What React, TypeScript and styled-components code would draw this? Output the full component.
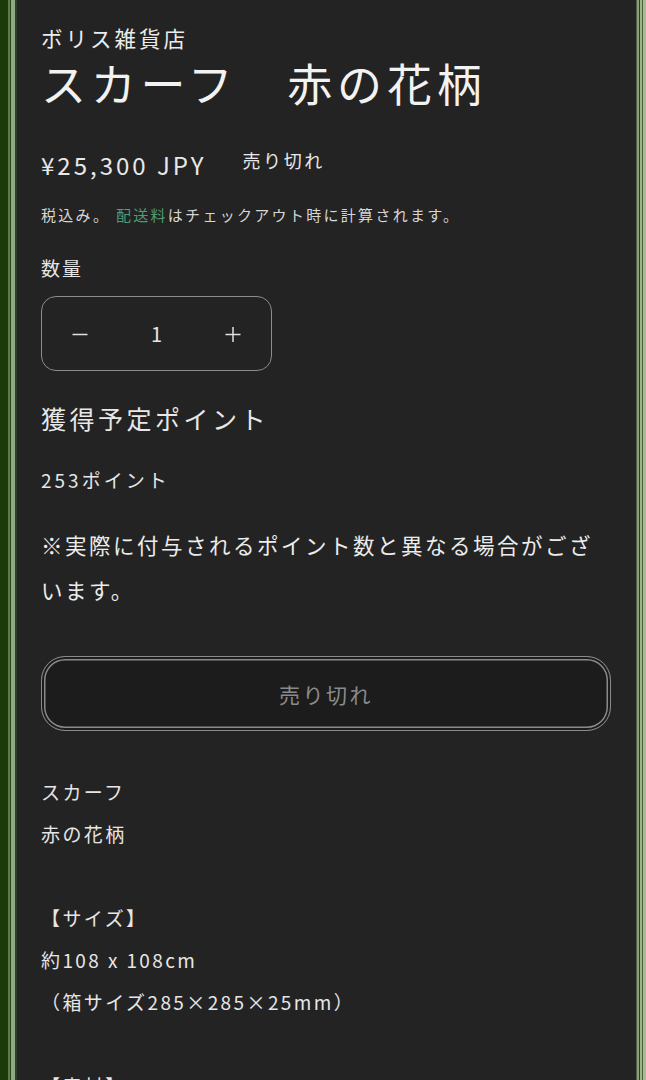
import styled, { createGlobalStyle } from 'styled-components';

// PARAM global
const GlobalStyle = createGlobalStyle`
  html, body {
    margin: 0;
    padding: 0;
    background: #1a3a08;
  }
  body {
    font-family: 'Noto Sans CJK JP', 'Noto Sans', sans-serif;
    color: #e6e6e6;
    -webkit-font-smoothing: antialiased;
  }
`;

// COMPONENT minus / plus icons
const MinusIcon = () => (
  <svg width='16' height='16' viewBox='0 0 16 16' fill='none'>
    <path d='M0.5 8.5H15.5' stroke='#e0e0e0' strokeWidth='1.5' />
  </svg>
);

const PlusIcon = () => (
  <svg width='16' height='16' viewBox='0 0 16 16' fill='none'>
    <path d='M0.5 8.5H15.5M8 1V16' stroke='#e0e0e0' strokeWidth='1.5' />
  </svg>
);

// COMPONENT product info
const App = () => {
  return (
    <>
      <GlobalStyle />
      <Page.Frame>
        <Page.Panel>
          <Product.Vendor>ボリス雑貨店</Product.Vendor>
          <Product.Title>スカーフ　赤の花柄</Product.Title>

          <Product.PriceRow>
            <Product.Price>¥25,300 JPY</Product.Price>
            <Product.Badge>売り切れ</Product.Badge>
          </Product.PriceRow>
          <Product.Tax>
            税込み。 <Product.Link href='#'>配送料</Product.Link>はチェックアウト時に計算されます。
          </Product.Tax>

          <Qty.Label>数量</Qty.Label>
          <Qty.Box>
            <Qty.Btn aria-label='減らす'>
              <MinusIcon />
            </Qty.Btn>
            <Qty.Value>1</Qty.Value>
            <Qty.Btn aria-label='増やす'>
              <PlusIcon />
            </Qty.Btn>
          </Qty.Box>

          <Points.Heading>獲得予定ポイント</Points.Heading>
          <Points.Amount>253ポイント</Points.Amount>
          <Points.Note>※実際に付与されるポイント数と異なる場合がございます。</Points.Note>

          <Product.SoldOut disabled>売り切れ</Product.SoldOut>

          <Desc.Body>
            <Desc.Line>スカーフ</Desc.Line>
            <Desc.Line>赤の花柄</Desc.Line>
            <Desc.Line>&nbsp;</Desc.Line>
            <Desc.Line>【サイズ】</Desc.Line>
            <Desc.Line>約108 x 108cm</Desc.Line>
            <Desc.Line>（箱サイズ285×285×25mm）</Desc.Line>
            <Desc.Line>&nbsp;</Desc.Line>
            <Desc.Line>【素材】</Desc.Line>
          </Desc.Body>
        </Page.Panel>
      </Page.Frame>
    </>
  );
};

// PARAM style
const Page = {
  Frame: styled.div`
    display: flex;
    align-items: stretch;
    height: 100vh;
    overflow: hidden;
    padding: 0 10px 0 17px;
    background:
      linear-gradient(
          90deg,
          #1b3b09 0 8px,
          #5d7c4c 8px 10px,
          #27470f 10px 11px,
          #8fa687 11px 15px,
          #2f3e28 15px 17px
        )
        left top / 17px 100% no-repeat,
      linear-gradient(
          90deg,
          #4f5f47 0 1px,
          #88a07e 1px 3px,
          #274715 3px 4px,
          #9ab290 4px 6px,
          #46682c 6px 7px,
          #aeb79a 7px 10px
        )
        right top / 10px 100% no-repeat,
      #1a3a08;
  `,
  Panel: styled.main`
    flex: 1;
    display: block;
    background-color: #232323;
    padding: 24px 25px 0 24px;
  `,
};

const Product = {
  Vendor: styled.p`
    margin: 0;
    font-size: 21.5px;
    line-height: 28px;
    letter-spacing: 3px;
    color: #ececec;
  `,
  Title: styled.h1`
    margin: 4px 0 0;
    font-size: 45px;
    line-height: 54px;
    font-weight: 400;
    letter-spacing: 4.8px;
    color: #f2f2f2;
  `,
  PriceRow: styled.div`
    display: flex;
    align-items: flex-start;
    margin-top: 40px;
    height: 30px;
  `,
  Price: styled.span`
    font-size: 24px;
    line-height: 30px;
    letter-spacing: 3px;
    color: #e8e8e8;
  `,
  Badge: styled.span`
    margin-left: 36px;
    font-size: 18px;
    line-height: 20px;
    letter-spacing: 2.6px;
    color: #e8e8e8;
  `,
  Tax: styled.p`
    margin: 24px 0 0;
    font-size: 15px;
    line-height: 22px;
    letter-spacing: 2.3px;
    color: #d6d6d6;
  `,
  Link: styled.a`
    color: #4f9d74;
    text-decoration: none;
  `,
  SoldOut: styled.button`
    display: block;
    margin-top: 44px;
    width: 100%;
    height: 75px;
    border: 1.5px solid #8a8a8a;
    border-radius: 24px;
    box-shadow:
      inset 0 0 0 2px #1c1c1c,
      inset 0 0 0 3.5px #8a8a8a;
    background-color: #1c1c1c;
    font-family: inherit;
    font-size: 21px;
    letter-spacing: 2.5px;
    color: #8a8a8a;
    cursor: not-allowed;
  `,
};

const Qty = {
  Label: styled.p`
    margin: 29px 0 0;
    font-size: 19px;
    line-height: 26px;
    letter-spacing: 2px;
    color: #e6e6e6;
  `,
  Box: styled.div`
    display: grid;
    grid-template-columns: repeat(3, 1fr);
    align-items: center;
    margin-top: 15px;
    width: 231px;
    height: 75px;
    box-sizing: border-box;
    border: 1.5px solid #8c8c8c;
    border-radius: 15px;
  `,
  Btn: styled.button`
    display: flex;
    align-items: center;
    justify-content: center;
    height: 100%;
    padding: 0;
    border: none;
    background: none;
  `,
  Value: styled.span`
    text-align: center;
    font-size: 20px;
    color: #e6e6e6;
  `,
};

const Points = {
  Heading: styled.h2`
    margin: 30px 0 0;
    font-size: 25px;
    line-height: 34px;
    font-weight: 400;
    letter-spacing: 3.5px;
    color: #e8e8e8;
  `,
  Amount: styled.p`
    margin: 32px 0 0;
    font-size: 19px;
    line-height: 26px;
    letter-spacing: 3px;
    color: #e6e6e6;
  `,
  Note: styled.p`
    margin: 29px 0 0;
    font-size: 21.5px;
    line-height: 45px;
    letter-spacing: 2.5px;
    color: #ececec;
  `,
};

const Desc = {
  Body: styled.div`
    margin-top: 40px;
  `,
  Line: styled.p`
    margin: 0;
    font-size: 19px;
    line-height: 42px;
    letter-spacing: 2.4px;
    color: #e6e6e6;
  `,
};

export default App;
